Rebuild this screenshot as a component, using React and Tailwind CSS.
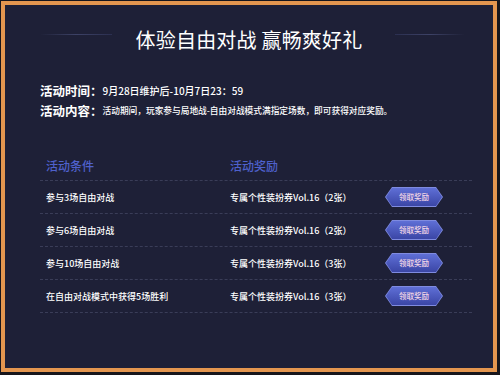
import React from "react";

const rows = [
  ["参与3场自由对战", "专属个性装扮券Vol.16（2张）"],
  ["参与6场自由对战", "专属个性装扮券Vol.16（2张）"],
  ["参与10场自由对战", "专属个性装扮券Vol.16（3张）"],
  ["在自由对战模式中获得5场胜利", "专属个性装扮券Vol.16（3张）"],
];

function Btn() {
  return (
    <div className="relative w-[58px] h-[20px]">
      <div className="absolute inset-0 [clip-path:polygon(7px_0,51px_0,58px_50%,51px_100%,7px_100%,0_50%)] bg-[#7f8be0]" />
      <div className="absolute inset-[1px] [clip-path:polygon(6px_0,50px_0,56px_50%,50px_100%,6px_100%,0_50%)] bg-gradient-to-b from-[#5f6fd6] to-[#3b46a6] flex items-center justify-center">
        <span className="text-[7.5px] leading-none text-[#f3d6e6]">领取奖励</span>
      </div>
    </div>
  );
}

export default function App() {
  return (
    <div className="w-[500px] h-[375px] bg-[#17161c] pt-[1px] pl-[1px] pr-[3px] pb-[3px] font-['Microsoft_YaHei','Noto_Sans_CJK_SC',sans-serif]">
      <div className="w-full h-full border-[4px] border-[#e4964f] bg-[#1e2037] flex flex-col">
        {/* Title */}
        <div className="relative h-[24px] mt-[23px] flex items-center justify-center">
          <div className="absolute left-[35px] top-[6px] w-[72px] h-px bg-gradient-to-r from-transparent via-[#3d4266] to-[#2b2f50]" />
          <div className="absolute right-[28px] top-[6px] w-[70px] h-px bg-gradient-to-r from-[#2b2f50] via-[#3d4266] to-transparent" />
          <span className="text-[20px] leading-none text-white tracking-[0.2px]">体验自由对战 赢畅爽好礼</span>
        </div>

        {/* Info */}
        <div className="mt-[29px] pl-[35px] flex flex-col">
          <div className="h-[20px] flex items-center text-white">
            <span className="text-[12.5px] font-bold leading-none">活动时间：</span>
            <span className="text-[10px] font-medium leading-none">9月28日维护后-10月7日23：59</span>
          </div>
          <div className="h-[20px] flex items-center text-white">
            <span className="text-[12.5px] font-bold leading-none">活动内容：</span>
            <span className="text-[8.7px] font-medium leading-none">活动期间，玩家参与局地战-自由对战模式满指定场数，即可获得对应奖励。</span>
          </div>
        </div>

        {/* Table */}
        <div className="mt-[31px] ml-[35px] w-[432px] flex flex-col">
          <div className="h-[29px] flex items-center border-b border-dashed border-[#3a3d58] text-[12px] font-medium text-[#4f61cc] leading-none">
            <span className="w-[190px] pl-[6px]">活动条件</span>
            <span>活动奖励</span>
          </div>
          {rows.map(([a, b], i) => (
            <div key={i} className="h-[33px] flex items-center border-b border-dashed border-[#3a3d58] text-[9px] font-medium text-white leading-none">
              <span className="w-[190px] pl-[6px]">{a}</span>
              <span className="w-[155px]">{b}</span>
              <Btn />
            </div>
          ))}
        </div>
      </div>
    </div>
  );
}
